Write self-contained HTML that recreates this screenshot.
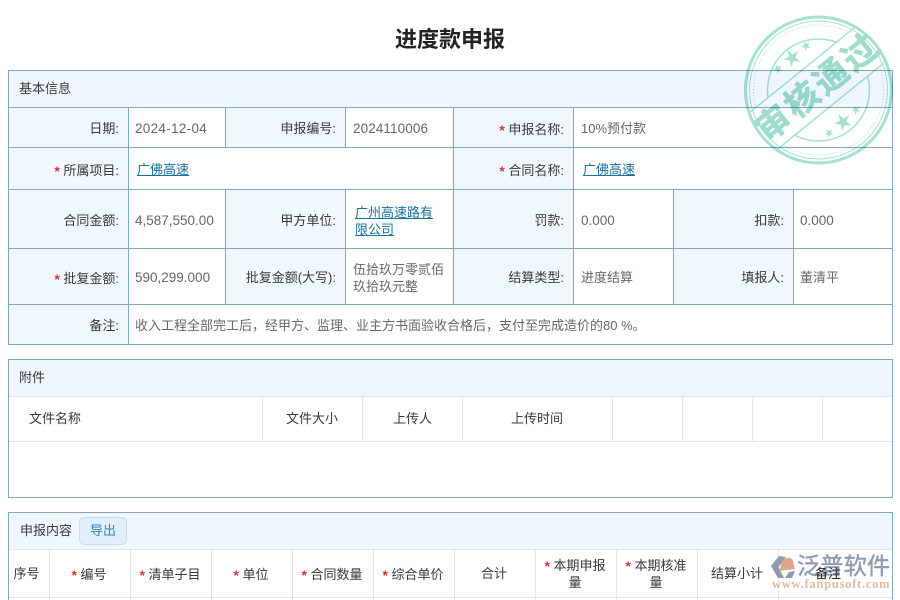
<!DOCTYPE html>
<html><head><meta charset="utf-8"><style>
html,body{margin:0;padding:0;background:#fff}
#p{position:relative;width:900px;height:600px;overflow:hidden;font:13px/18px "Liberation Sans","Noto Sans CJK SC",sans-serif;color:#383838}
#p div{position:absolute;box-sizing:border-box}
.h{background:#f0f6fe}
.l{background:#f0f7fd}
.ln{background:#7fa8b9}
.g{background:#e2e6e8}
.t{white-space:nowrap}
.r{text-align:right}
.c{text-align:center}
.v{color:#666}
.n{font-size:13.5px}
a{color:#1a6f9e;text-decoration:underline}
b{color:#d9342e;font-weight:bold;font-size:14px;position:relative;top:1px}
</style></head><body><div id="p">
<div class="t c" style="left:0;width:900px;top:25px;font-size:22px;line-height:30px;font-weight:bold;color:#222">进度款申报</div>

<!-- box 1 -->
<div class="h" style="left:9px;top:71px;width:883px;height:36px"></div>
<div class="l" style="left:9px;top:107px;width:119px;height:237px"></div>
<div class="l" style="left:226px;top:107px;width:119px;height:40px"></div>
<div class="l" style="left:454px;top:107px;width:119px;height:197px"></div>
<div class="l" style="left:226px;top:190px;width:119px;height:114px"></div>
<div class="l" style="left:674px;top:190px;width:119px;height:114px"></div>
<div class="ln" style="left:8px;top:70px;width:885px;height:1px"></div>
<div class="ln" style="left:8px;top:107px;width:885px;height:1px"></div>
<div class="ln" style="left:8px;top:147px;width:885px;height:1px"></div>
<div class="ln" style="left:8px;top:189px;width:885px;height:1px"></div>
<div class="ln" style="left:8px;top:248px;width:885px;height:1px"></div>
<div class="ln" style="left:8px;top:304px;width:885px;height:1px"></div>
<div class="ln" style="left:8px;top:344px;width:885px;height:1px"></div>
<div class="ln" style="left:8px;top:70px;width:1px;height:275px"></div>
<div class="ln" style="left:892px;top:70px;width:1px;height:275px"></div>
<div class="ln" style="left:128px;top:107px;width:1px;height:237px"></div>
<div class="ln" style="left:225px;top:107px;width:1px;height:40px"></div>
<div class="ln" style="left:345px;top:107px;width:1px;height:40px"></div>
<div class="ln" style="left:453px;top:107px;width:1px;height:197px"></div>
<div class="ln" style="left:573px;top:107px;width:1px;height:197px"></div>
<div class="ln" style="left:225px;top:189px;width:1px;height:115px"></div>
<div class="ln" style="left:345px;top:189px;width:1px;height:115px"></div>
<div class="ln" style="left:673px;top:189px;width:1px;height:115px"></div>
<div class="ln" style="left:793px;top:189px;width:1px;height:115px"></div>

<div class="t" style="left:19px;top:80px">基本信息</div>
<div class="t r" style="left:9px;width:110px;top:120px">日期:</div>
<div class="t v n" style="left:135px;top:120px;letter-spacing:.3px">2024-12-04</div>
<div class="t r" style="left:226px;width:110px;top:120px">申报编号:</div>
<div class="t v n" style="left:353px;top:120px;letter-spacing:.1px">2024110006</div>
<div class="t r" style="left:454px;width:110px;top:120px"><b>*</b> 申报名称:</div>
<div class="t v" style="left:581px;top:120px">10%预付款</div>

<div class="t r" style="left:9px;width:110px;top:161px"><b>*</b> 所属项目:</div>
<div class="t" style="left:137px;top:161px"><a>广佛高速</a></div>
<div class="t r" style="left:454px;width:110px;top:161px"><b>*</b> 合同名称:</div>
<div class="t" style="left:583px;top:161px"><a>广佛高速</a></div>

<div class="t r" style="left:9px;width:110px;top:212px">合同金额:</div>
<div class="t v n" style="left:135px;top:212px">4,587,550.00</div>
<div class="t r" style="left:226px;width:110px;top:212px">甲方单位:</div>
<div style="left:355px;top:204px;width:90px;line-height:17px"><a>广州高速路有限公司</a></div>
<div class="t r" style="left:454px;width:110px;top:212px">罚款:</div>
<div class="t v n" style="left:581px;top:212px">0.000</div>
<div class="t r" style="left:674px;width:110px;top:212px">扣款:</div>
<div class="t v n" style="left:800px;top:212px">0.000</div>

<div class="t r" style="left:9px;width:110px;top:269px"><b>*</b> 批复金额:</div>
<div class="t v n" style="left:135px;top:269px">590,299.000</div>
<div class="t r" style="left:226px;width:110px;top:269px">批复金额(大写):</div>
<div class="v" style="left:353px;top:261px;width:92px;line-height:17px">伍拾玖万零贰佰玖拾玖元整</div>
<div class="t r" style="left:454px;width:110px;top:269px">结算类型:</div>
<div class="t v" style="left:581px;top:269px">进度结算</div>
<div class="t r" style="left:674px;width:110px;top:269px">填报人:</div>
<div class="t v" style="left:800px;top:269px">董清平</div>

<div class="t r" style="left:9px;width:110px;top:317px">备注:</div>
<div class="t v" style="left:135px;top:317px">收入工程全部完工后，经甲方、监理、业主方书面验收合格后，支付至完成造价的80 %。</div>

<!-- box 2 -->
<div class="h" style="left:9px;top:360px;width:883px;height:36px"></div>
<div class="ln" style="left:8px;top:359px;width:885px;height:1px"></div>
<div class="ln" style="left:8px;top:497px;width:885px;height:1px"></div>
<div class="ln" style="left:8px;top:359px;width:1px;height:139px"></div>
<div class="ln" style="left:892px;top:359px;width:1px;height:139px"></div>
<div class="g" style="left:9px;top:396px;width:883px;height:1px"></div>
<div class="g" style="left:9px;top:441px;width:883px;height:1px"></div>
<div class="g" style="left:262px;top:397px;width:1px;height:44px"></div>
<div class="g" style="left:362px;top:397px;width:1px;height:44px"></div>
<div class="g" style="left:462px;top:397px;width:1px;height:44px"></div>
<div class="g" style="left:612px;top:397px;width:1px;height:44px"></div>
<div class="g" style="left:682px;top:397px;width:1px;height:44px"></div>
<div class="g" style="left:752px;top:397px;width:1px;height:44px"></div>
<div class="g" style="left:822px;top:397px;width:1px;height:44px"></div>
<div class="t" style="left:19px;top:369px">附件</div>
<div class="t" style="left:29px;top:410px">文件名称</div>
<div class="t c" style="left:262px;width:100px;top:410px">文件大小</div>
<div class="t c" style="left:363px;width:99px;top:410px">上传人</div>
<div class="t c" style="left:462px;width:150px;top:410px">上传时间</div>

<!-- box 3 -->
<div class="h" style="left:9px;top:513px;width:883px;height:36px"></div>
<div class="ln" style="left:8px;top:512px;width:885px;height:1px"></div>
<div class="ln" style="left:8px;top:512px;width:1px;height:88px"></div>
<div class="ln" style="left:892px;top:512px;width:1px;height:88px"></div>
<div class="g" style="left:9px;top:549px;width:883px;height:1px"></div>
<div class="g" style="left:9px;top:597px;width:883px;height:1px"></div>
<div class="g" style="left:49px;top:550px;width:1px;height:50px"></div>
<div class="g" style="left:130px;top:550px;width:1px;height:50px"></div>
<div class="g" style="left:211px;top:550px;width:1px;height:50px"></div>
<div class="g" style="left:292px;top:550px;width:1px;height:50px"></div>
<div class="g" style="left:373px;top:550px;width:1px;height:50px"></div>
<div class="g" style="left:454px;top:550px;width:1px;height:50px"></div>
<div class="g" style="left:535px;top:550px;width:1px;height:50px"></div>
<div class="g" style="left:616px;top:550px;width:1px;height:50px"></div>
<div class="g" style="left:697px;top:550px;width:1px;height:50px"></div>
<div class="g" style="left:778px;top:550px;width:1px;height:50px"></div>
<div class="t" style="left:20px;top:522px">申报内容</div>
<div class="t c" style="left:79px;top:517px;width:48px;height:28px;line-height:25px;background:#e1f0fb;border:1px solid #c8dfee;border-radius:5px;color:#2b86bb">导出</div>
<div class="t c" style="left:9px;width:35px;top:565px">序号</div>
<div class="t c" style="left:49px;width:80px;top:565px"><b>*</b> 编号</div>
<div class="t c" style="left:130px;width:80px;top:565px"><b>*</b> 清单子目</div>
<div class="t c" style="left:211px;width:80px;top:565px"><b>*</b> 单位</div>
<div class="t c" style="left:292px;width:80px;top:565px"><b>*</b> 合同数量</div>
<div class="t c" style="left:373px;width:80px;top:565px"><b>*</b> 综合单价</div>
<div class="t c" style="left:454px;width:80px;top:565px">合计</div>
<div class="c" style="left:540px;width:70px;top:557px;line-height:17px"><b>*</b> 本期申报量</div>
<div class="c" style="left:621px;width:70px;top:557px;line-height:17px"><b>*</b> 本期核准量</div>
<div class="t c" style="left:697px;width:80px;top:565px">结算小计</div>

<!-- watermark logo -->
<svg style="position:absolute;left:765px;top:552px" width="40" height="30" viewBox="0 0 40 30">
<path d="M14 4 L6 14 L13 26 L19 26 L13.5 15 L21 5 Z" fill="#8c9bb3"/>
<path d="M17 9 C21 5 27 5 28 9 L30 17 L14.5 19 Z" fill="#e2a688"/>
<path d="M20 26 L24 20 L30 19 L27 26 Z" fill="#8c9bb3"/>
</svg>
<div class="t" style="left:797px;top:551px;font-size:23.3px;line-height:30px;color:#8e9bb0;-webkit-text-stroke:.4px #8e9bb0">泛普软件</div>
<div class="t" style="left:772px;top:577px;font:bold 12.5px/15px 'Liberation Serif',serif;color:#e3b8a2;letter-spacing:.75px">www.fanpusoft.com</div>
<div class="t c" style="left:788px;width:80px;top:565px;color:#222">备注</div>

<!-- stamp -->
<svg style="position:absolute;left:738px;top:8px;mix-blend-mode:multiply" width="162" height="164" viewBox="0 0 162 164">
<defs><mask id="m" maskUnits="userSpaceOnUse" x="0" y="0" width="162" height="164"><rect width="162" height="164" fill="#fff"/><rect x="-90" y="-23" width="180" height="46" fill="#000" transform="translate(78.5,80) rotate(-39)"/></mask></defs>
<g transform="translate(80.5,82)" fill="none" stroke="#a6e0d0">
<circle r="73" stroke-width="3"/>
<circle r="69" stroke-width="1"/>
</g>
<g mask="url(#m)"><g transform="translate(80.5,82)" fill="none" stroke="#a6e0d0">
<circle r="65" stroke-width="1" stroke-dasharray="1 2"/>
<circle r="51" stroke-width="1.5"/>
</g></g>
<g transform="translate(78.5,80) rotate(-39)">
<path d="M-68 -23 H68 M-68 23 H68" stroke="#a6e0d0" stroke-width="1.5"/>
<text x="1.5" y="12" text-anchor="middle" font-family="'Noto Sans CJK SC',sans-serif" font-weight="700" font-size="34" letter-spacing="3" fill="#9edccb" stroke="#9edccb" stroke-width=".6">审核通过</text>
</g>
<g fill="#a6e0d0">
<polygon transform="translate(54,50) scale(9) rotate(-30)" points="0,-1 .224,-.309 .951,-.309 .363,.118 .588,.809 0,.382 -.588,.809 -.363,.118 -.951,-.309 -.224,-.309"/>
<polygon transform="translate(40,61) scale(5) rotate(-30)" points="0,-1 .224,-.309 .951,-.309 .363,.118 .588,.809 0,.382 -.588,.809 -.363,.118 -.951,-.309 -.224,-.309"/>
<polygon transform="translate(68,38) scale(5) rotate(-30)" points="0,-1 .224,-.309 .951,-.309 .363,.118 .588,.809 0,.382 -.588,.809 -.363,.118 -.951,-.309 -.224,-.309"/>
<polygon transform="translate(105,114) scale(9) rotate(-30)" points="0,-1 .224,-.309 .951,-.309 .363,.118 .588,.809 0,.382 -.588,.809 -.363,.118 -.951,-.309 -.224,-.309"/>
<polygon transform="translate(91,125) scale(5) rotate(-30)" points="0,-1 .224,-.309 .951,-.309 .363,.118 .588,.809 0,.382 -.588,.809 -.363,.118 -.951,-.309 -.224,-.309"/>
<polygon transform="translate(118,102) scale(5) rotate(-30)" points="0,-1 .224,-.309 .951,-.309 .363,.118 .588,.809 0,.382 -.588,.809 -.363,.118 -.951,-.309 -.224,-.309"/>
</g>
</svg>
</div></body></html>
